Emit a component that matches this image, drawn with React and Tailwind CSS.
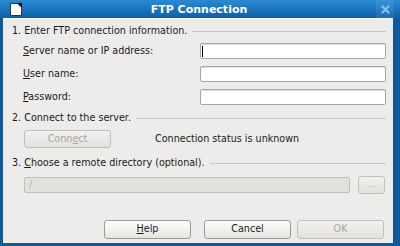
import React from "react";

const Sep = ({ children }) => (
  <div className="flex items-center h-[14px]">
    <span className="whitespace-nowrap">{children}</span>
    <div className="flex-1 h-px bg-[#c9c6c2] ml-[5px]" />
  </div>
);

const U = ({ children }) => (
  <span className="underline underline-offset-[1px] decoration-[1px]">{children}</span>
);

const Input = ({ cursor }) => (
  <div className="w-[186px] h-[16px] bg-white border border-[#a8a5a1] rounded-[2px] flex items-center shadow-[inset_0_1px_0_#e2e0dd]">
    {cursor && <div className="w-px h-[11px] bg-black ml-[1px]" />}
  </div>
);

const Btn = ({ children, disabled }) => (
  <div
    className={`w-[87px] h-[19px] rounded-[3px] border flex items-center justify-center ${
      disabled
        ? "border-[#c2bfbb] bg-gradient-to-b from-[#f2f1f0] to-[#e3e1de] text-[#a9a6a2]"
        : "border-[#9d9995] bg-gradient-to-b from-[#ffffff] to-[#e6e4e1] text-[#1a1a1a]"
    }`}
  >
    {children}
  </div>
);

export default function App() {
  return (
    <div
      className="w-[400px] h-[246px] bg-[#0f5a9a] flex flex-col text-[9.6px] text-[#1a1a1a]"
      style={{ fontFamily: '"DejaVu Sans", sans-serif' }}
    >
      {/* title bar */}
      <div className="h-[18px] flex items-center bg-gradient-to-b from-[#2b8ad3] to-[#0b60a8]">
        <svg className="ml-[10px]" width="12" height="13" viewBox="0 0 12 13">
          <polygon points="0.5,0.5 8,0.5 11.5,4 11.5,12.5 0.5,12.5" fill="#fff" stroke="#333" strokeWidth="1" />
          <polygon points="7,0 12,0 12,5" fill="#111" />
        </svg>
        <div className="flex-1 text-center text-white font-bold text-[11px] leading-none">FTP Connection</div>
        <div className="w-[18px] h-[18px] mr-[6px] bg-gradient-to-b from-[#3a93d6] to-[#1a6db3] flex items-center justify-center">
          <svg width="9" height="9" viewBox="0 0 9 9">
            <path d="M1.5 1.5 L7.5 7.5 M7.5 1.5 L1.5 7.5" stroke="#8cc0e8" strokeWidth="2.2" strokeLinecap="round" />
          </svg>
        </div>
      </div>
      {/* body */}
      <div className="flex-1 ml-[3px] mr-[7px] mb-[3px] bg-[#edeceb] border-t border-[#f7f7f6] pl-[9px] pr-[7px] pt-[5px] flex flex-col">
        <Sep>1. Enter FTP connection information.</Sep>
        <div className="flex flex-col gap-[7px] mt-[5px] pl-[11px]">
          <div className="flex items-center h-[16px] justify-between">
            <span><U>S</U>erver name or IP address:</span>
            <Input cursor />
          </div>
          <div className="flex items-center h-[16px] justify-between">
            <span><U>U</U>ser name:</span>
            <Input />
          </div>
          <div className="flex items-center h-[16px] justify-between">
            <span><U>P</U>assword:</span>
            <Input />
          </div>
        </div>
        <div className="mt-[6px]">
          <Sep>2. Connect to the server.</Sep>
        </div>
        <div className="flex items-center mt-[5px] pl-[12px] h-[18px]">
          <div className="w-[87px] h-[18px] rounded-[3px] border border-[#c2bfbb] bg-gradient-to-b from-[#f2f1f0] to-[#e3e1de] text-[#a9a6a2] flex items-center justify-center">
            <span>Conn<U>e</U>ct</span>
          </div>
          <span className="ml-[44px]">Connection status is unknown</span>
        </div>
        <div className="mt-[8px]">
          <Sep>3. <U>C</U>hoose a remote directory (optional).</Sep>
        </div>
        <div className="flex items-center mt-[6px] pl-[12px] h-[18px]">
          <div className="w-[326px] h-[16px] rounded-[2px] border border-[#c2bfbb] bg-[#e3e1de] flex items-center pl-[4px] text-[#b5b2ae]">/</div>
          <div className="ml-[8px] w-[27px] h-[18px] rounded-[3px] border border-[#c2bfbb] bg-gradient-to-b from-[#f2f1f0] to-[#e3e1de] text-[#a9a6a2] flex items-center justify-center text-[8px]">...</div>
        </div>
        <div className="flex justify-end mt-auto mb-[4px] pr-[2px]">
          <Btn><span><U>H</U>elp</span></Btn>
          <div className="w-[13px]" />
          <Btn>Cancel</Btn>
          <div className="w-[6px]" />
          <Btn disabled>OK</Btn>
        </div>
      </div>
    </div>
  );
}
